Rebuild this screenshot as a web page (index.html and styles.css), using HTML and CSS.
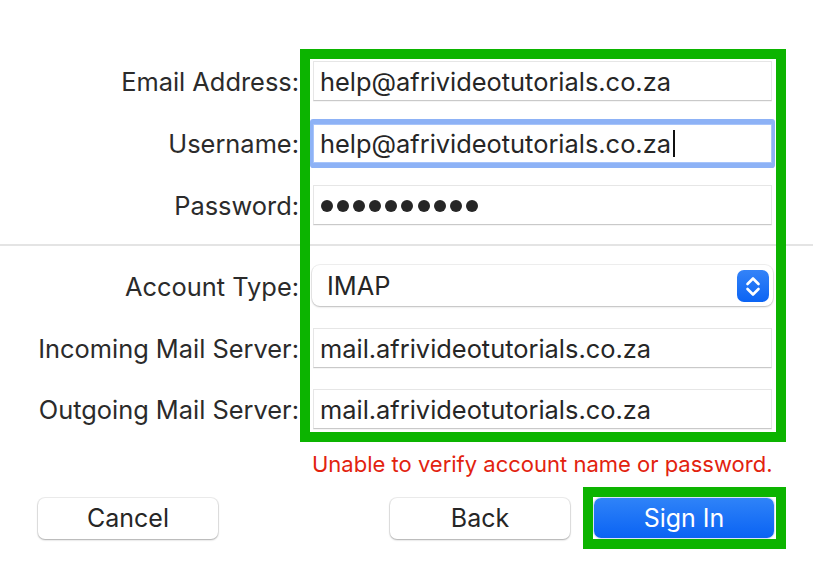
FILE: index.html
```html
<!DOCTYPE html>
<html lang="en">
<head>
<meta charset="utf-8">
<title>Mail Account</title>
<link rel="stylesheet" href="styles.css">
</head>
<body>
<div class="sheet">
  <div class="form">
    <div class="label r1">Email Address:</div>
    <div class="field r1">help@afrivideotutorials.co.za</div>

    <div class="label r2">Username:</div>
    <div class="field focused r2">help@afrivideotutorials.co.za<span class="caret"></span></div>

    <div class="label r3">Password:</div>
    <div class="field r3"><span class="dots"><i></i><i></i><i></i><i></i><i></i><i></i><i></i><i></i><i></i><i></i></span></div>

    <div class="separator"></div>

    <div class="label r5">Account Type:</div>
    <div class="popup r5">
      <span class="popup-text">IMAP</span>
      <svg class="stepper" width="32" height="32" viewBox="0 0 32 32">
        <defs>
          <linearGradient id="sg" x1="0" y1="0" x2="0" y2="1">
            <stop offset="0" stop-color="#3483f8"/>
            <stop offset="1" stop-color="#0b64f4"/>
          </linearGradient>
        </defs>
        <rect x="0" y="0" width="32" height="32" rx="7" fill="url(#sg)"/>
        <path d="M10.5 14 L16 8.5 L21.5 14" fill="none" stroke="#fff" stroke-width="2.6" stroke-linecap="round" stroke-linejoin="round"/>
        <path d="M10.5 19 L16 24.5 L21.5 19" fill="none" stroke="#fff" stroke-width="2.6" stroke-linecap="round" stroke-linejoin="round"/>
      </svg>
    </div>

    <div class="label r6">Incoming Mail Server:</div>
    <div class="field r6">mail.afrivideotutorials.co.za</div>

    <div class="label r7">Outgoing Mail Server:</div>
    <div class="field r7">mail.afrivideotutorials.co.za</div>

    <div class="frame"></div>

    <div class="error">Unable to verify account name or password.</div>
  </div>

  <div class="buttons">
    <button class="btn">Cancel</button>
    <div class="spacer"></div>
    <button class="btn">Back</button>
    <div class="highlight"><button class="btn primary">Sign In</button></div>
  </div>
</div>
</body>
</html>
```

FILE: styles.css
```css
* { box-sizing: border-box; }

html, body {
  margin: 0;
  padding: 0;
  background: #ffffff;
}

body {
  width: 813px;
  height: 565px;
  overflow: hidden;
  font-family: Inter, "Noto Sans", sans-serif;
  color: #262626;
}

.sheet {
  padding-top: 50px;
}

.form {
  display: grid;
  grid-template-columns: 300px 486px 27px;
  grid-template-rows: 62px 62px 62px 18px 63px 61px 62px auto;
}

.label {
  grid-column: 1;
  justify-self: end;
  align-self: center;
  padding-right: 1px;
  padding-top: 1px;
  font-size: 25.4px;
  color: #2b2b2b;
  white-space: nowrap;
}

.r1 { grid-row: 1; }
.r2 { grid-row: 2; }
.r3 { grid-row: 3; }
.r5 { grid-row: 5; }
.r6 { grid-row: 6; }
.r7 { grid-row: 7; }

.field {
  grid-column: 2;
  align-self: center;
  margin: 0 14px 0 13px;
  height: 40px;
  display: flex;
  align-items: center;
  padding-left: 6px;
  padding-top: 1px;
  background: #fff;
  border: 1px solid #e6e6e6;
  border-bottom-color: #c9c9c9;
  box-shadow: 0 1px 0 rgba(0, 0, 0, 0.04);
  font-size: 25.4px;
  color: #262626;
  white-space: nowrap;
}

.field.focused {
  height: 39px;
  border: 1px solid #a7c4fa;
  box-shadow: 0 0 0 3px #8db2f6, 0 -2px 0 3px #8db2f6, 0 2px 0 3px #8db2f6;
  border-radius: 1px;
}

.caret {
  display: inline-block;
  width: 2px;
  height: 27px;
  margin-left: 2px;
  background: #111;
}

.dots {
  display: flex;
  gap: 4.1px;
  padding-left: 1px;
}

.dots i {
  display: block;
  width: 12px;
  height: 12px;
  border-radius: 50%;
  background: #262626;
}

.separator {
  grid-column: 1 / -1;
  grid-row: 4;
  align-self: center;
  height: 2px;
  background: #e4e4e4;
}

.popup {
  grid-column: 2;
  align-self: center;
  margin: 0 13px 0 12px;
  height: 41px;
  display: flex;
  align-items: center;
  justify-content: space-between;
  padding: 0 4px 0 15px;
  background: #fff;
  border-radius: 8px;
  box-shadow: 0 0 0 1px rgba(0, 0, 0, 0.06), 0 1px 2px rgba(0, 0, 0, 0.22);
  font-size: 25.4px;
  color: #262626;
}

.stepper {
  display: block;
}

.frame {
  grid-column: 2;
  grid-row: 1 / 8;
  margin: -1px 0 -2px 0;
  border: 10px solid #0cb400;
  z-index: 2;
  pointer-events: none;
}

.error {
  grid-column: 2;
  grid-row: 8;
  margin: 12px 0 0 12px;
  height: 24px;
  line-height: 24px;
  font-size: 22px;
  color: #e2220e;
  white-space: nowrap;
}

.buttons {
  display: flex;
  align-items: center;
  padding: 0 27px 0 38px;
  margin-top: 11px;
}

.spacer { flex: 1; }

.btn {
  width: 180px;
  height: 41px;
  border: none;
  border-radius: 7px;
  background: #fff;
  box-shadow: 0 0 0 1px rgba(0, 0, 0, 0.07), 0 1px 2px rgba(0, 0, 0, 0.28);
  font-family: Inter, "Noto Sans", sans-serif;
  font-size: 25px;
  color: #262626;
  padding: 0;
  margin: 0;
}

.highlight {
  margin-left: 13px;
  border: 10px solid #0cb400;
  padding: 1px 2px 1px 1px;
  display: flex;
}

.btn.primary {
  height: 40px;
  background: linear-gradient(#2f83f8, #0a63f4);
  color: #ffffff;
  box-shadow: 0 0 0 1px rgba(0, 60, 200, 0.15);
}
```
